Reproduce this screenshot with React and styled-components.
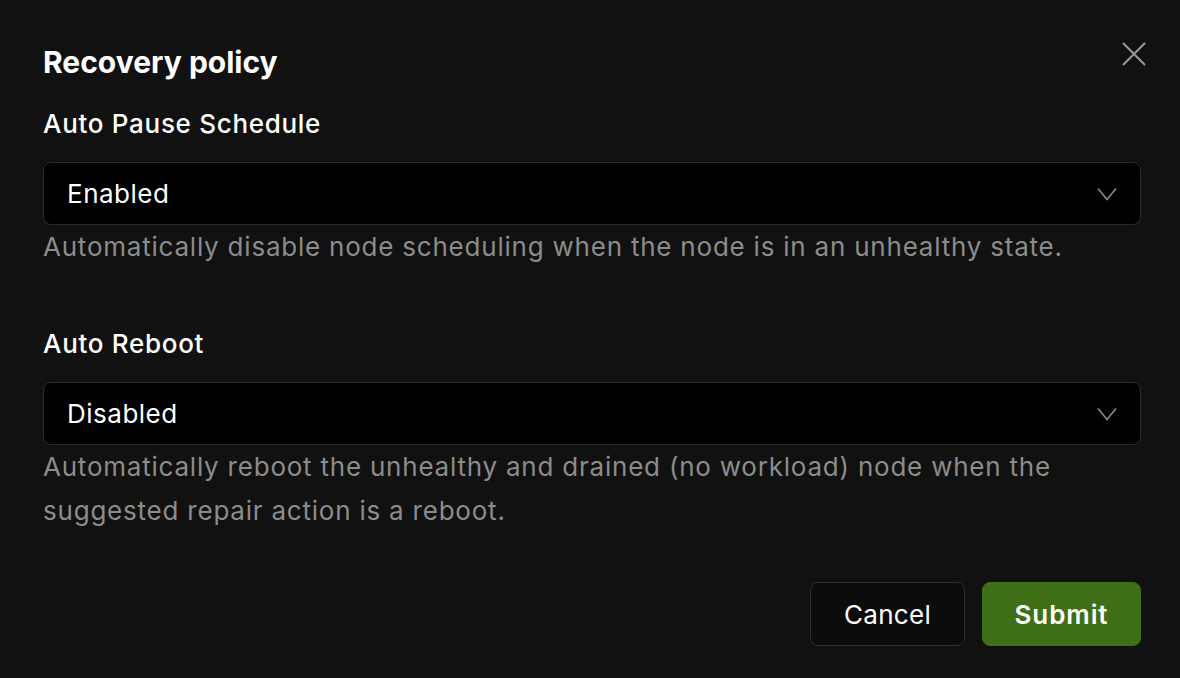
import React from "react";
import styled, { createGlobalStyle } from "styled-components";

const Global = createGlobalStyle`
  html, body { margin: 0; padding: 0; background: #111111; }
  body { font-family: Inter, "Noto Sans", sans-serif; color: #ffffff; -webkit-font-smoothing: antialiased; }
  * { box-sizing: border-box; }
`;

const Dialog = styled.div`
  width: 1180px;
  height: 678px;
  background: #111111;
  padding: 40px 39px 0 43px;
  display: flex;
  flex-direction: column;
  position: relative;
`;

const Header = styled.div`
  display: flex;
  align-items: center;
  justify-content: space-between;
  margin-bottom: 22px;
`;

const Title = styled.h2`
  margin: 0;
  font-size: 30px;
  line-height: 44px;
  font-weight: 700;
  color: #ffffff;
`;

const CloseButton = styled.button`
  position: absolute;
  top: 42px;
  right: 34px;
  width: 24px;
  height: 24px;
  padding: 0;
  border: 0;
  background: transparent;
  color: #9a9a9a;
  display: flex;
  cursor: pointer;
`;

const Fields = styled.div`
  display: flex;
  flex-direction: column;
  gap: 57px;
`;

const Field = styled.div`
  display: flex;
  flex-direction: column;
`;

const Label = styled.label`
  font-size: 26px;
  line-height: 36px;
  font-weight: 500;
  letter-spacing: 0.7px;
  color: #ffffff;
  margin-bottom: 20px;
`;

const Select = styled.div`
  height: 63px;
  border: 1.5px solid #2c2c2c;
  border-radius: 8px;
  background: #000000;
  display: flex;
  align-items: center;
  justify-content: space-between;
  padding: 0 23px 0 23px;
  font-size: 26px;
  letter-spacing: 0.5px;
  color: #ffffff;
`;

const Help = styled.p`
  margin: 0;
  font-size: 26px;
  line-height: 44px;
  letter-spacing: 0.78px;
  color: #8c8c8c;
`;

const Footer = styled.div`
  display: flex;
  justify-content: flex-end;
  gap: 17px;
  margin-top: 49px;
`;

const Button = styled.button`
  height: 64px;
  width: ${(p) => p.$w}px;
  padding: 0;
  border-radius: 8px;
  font-family: inherit;
  font-size: 26px;
  letter-spacing: ${(p) => (p.$primary ? "0.9px" : "0.3px")};
  font-weight: ${(p) => (p.$primary ? 600 : 400)};
  color: #ffffff;
  background: ${(p) => (p.$primary ? "#3e6e15" : "#0c0c0c")};
  border: 1.5px solid ${(p) => (p.$primary ? "#3e6e15" : "#2e2e2e")};
  cursor: pointer;
`;

const Chevron = () => (
  <svg width="20" height="14" viewBox="0 0 20 14" fill="none">
    <path d="M1 1.5 L10 12.5 L19 1.5" stroke="#8a8a8a" strokeWidth="1.6" />
  </svg>
);

const XIcon = () => (
  <svg width="24" height="24" viewBox="0 0 24 24" fill="none">
    <path d="M1 1 L23 23 M23 1 L1 23" stroke="currentColor" strokeWidth="2" />
  </svg>
);

const fields = [
  {
    label: "Auto Pause Schedule",
    value: "Enabled",
    help: "Automatically disable node scheduling when the node is in an unhealthy state.",
  },
  {
    label: "Auto Reboot",
    value: "Disabled",
    help: "Automatically reboot the unhealthy and drained (no workload) node when the suggested repair action is a reboot.",
  },
];

export default function App() {
  return (
    <>
      <Global />
      <Dialog>
        <Header>
          <Title>Recovery policy</Title>
        </Header>
        <CloseButton aria-label="Close">
          <XIcon />
        </CloseButton>
        <Fields>
          {fields.map((f) => (
            <Field key={f.label}>
              <Label>{f.label}</Label>
              <Select>
                <span>{f.value}</span>
                <Chevron />
              </Select>
              <Help>{f.help}</Help>
            </Field>
          ))}
        </Fields>
        <Footer>
          <Button $w={155}>Cancel</Button>
          <Button $w={159} $primary>
            Submit
          </Button>
        </Footer>
      </Dialog>
    </>
  );
}
